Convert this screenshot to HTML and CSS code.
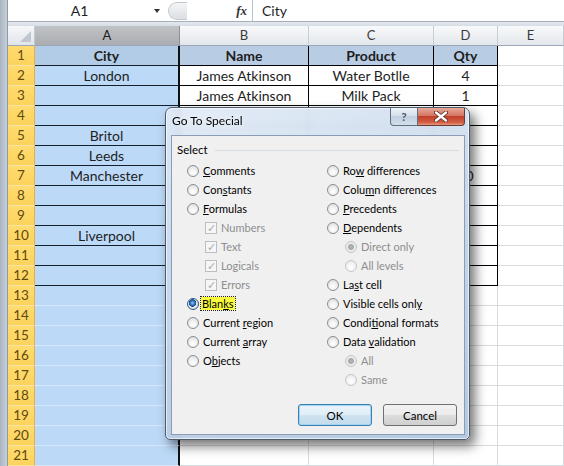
FILE: index.html
```html
<!DOCTYPE html>
<html lang="en">
<head>
    <meta charset="UTF-8">
    <meta name="viewport" content="width=device-width, initial-scale=1.0">
    <title>Go To Special</title>
    <link rel="stylesheet" href="styles.css">
</head>
<body>
    <div class="app">
        <div class="edge"></div>
        <div class="main">
            <div class="formula-bar">
                <div class="name-box">A1<span class="drop"></span></div>
                <div class="grip"></div>
                <div class="fx">fx</div>
                <div class="formula-input">City</div>
            </div>
            <div class="bar-gap"></div>

            <div class="sheet">
                <div class="corner"></div>
                <div class="ch sel">A</div>
                <div class="ch">B</div>
                <div class="ch">C</div>
                <div class="ch">D</div>
                <div class="ch">E</div>

                <div class="rh">1</div><div class="c a t hd">City</div><div class="c t hd">Name</div><div class="c t hd">Product</div><div class="c t hd">Qty</div><div class="c"></div>
                <div class="rh">2</div><div class="c a t">London</div><div class="c t">James Atkinson</div><div class="c t">Water Botlle</div><div class="c t">4</div><div class="c"></div>
                <div class="rh">3</div><div class="c a t"></div><div class="c t">James Atkinson</div><div class="c t">Milk Pack</div><div class="c t">1</div><div class="c"></div>
                <div class="rh">4</div><div class="c a t"></div><div class="c t"></div><div class="c t"></div><div class="c t"></div><div class="c"></div>
                <div class="rh">5</div><div class="c a t">Britol</div><div class="c t"></div><div class="c t"></div><div class="c t"></div><div class="c"></div>
                <div class="rh">6</div><div class="c a t">Leeds</div><div class="c t"></div><div class="c t"></div><div class="c t"></div><div class="c"></div>
                <div class="rh">7</div><div class="c a t">Manchester</div><div class="c t"></div><div class="c t"></div><div class="c t">10</div><div class="c"></div>
                <div class="rh">8</div><div class="c a t"></div><div class="c t"></div><div class="c t"></div><div class="c t"></div><div class="c"></div>
                <div class="rh">9</div><div class="c a t"></div><div class="c t"></div><div class="c t"></div><div class="c t"></div><div class="c"></div>
                <div class="rh">10</div><div class="c a t">Liverpool</div><div class="c t"></div><div class="c t"></div><div class="c t"></div><div class="c"></div>
                <div class="rh">11</div><div class="c a t"></div><div class="c t"></div><div class="c t"></div><div class="c t"></div><div class="c"></div>
                <div class="rh">12</div><div class="c a t"></div><div class="c t"></div><div class="c t"></div><div class="c t"></div><div class="c"></div>
                <div class="rh">13</div><div class="c a"></div><div class="c"></div><div class="c"></div><div class="c"></div><div class="c"></div>
                <div class="rh">14</div><div class="c a"></div><div class="c"></div><div class="c"></div><div class="c"></div><div class="c"></div>
                <div class="rh">15</div><div class="c a"></div><div class="c"></div><div class="c"></div><div class="c"></div><div class="c"></div>
                <div class="rh">16</div><div class="c a"></div><div class="c"></div><div class="c"></div><div class="c"></div><div class="c"></div>
                <div class="rh">17</div><div class="c a"></div><div class="c"></div><div class="c"></div><div class="c"></div><div class="c"></div>
                <div class="rh">18</div><div class="c a"></div><div class="c"></div><div class="c"></div><div class="c"></div><div class="c"></div>
                <div class="rh">19</div><div class="c a"></div><div class="c"></div><div class="c"></div><div class="c"></div><div class="c"></div>
                <div class="rh">20</div><div class="c a"></div><div class="c"></div><div class="c"></div><div class="c"></div><div class="c"></div>
                <div class="rh">21</div><div class="c a"></div><div class="c"></div><div class="c"></div><div class="c"></div><div class="c"></div>
            </div>
        </div>
    </div>

    <!-- Go To Special dialog, floats over the sheet -->
    <div class="dialog">
        <div class="titlebar">
            <span class="title">Go To Special</span>
            <div class="caption-btns">
                <span class="help">?</span>
                <span class="close">
                    <svg width="14" height="11" viewBox="0 0 14 11">
                        <path d="M2 1.5 L12 9.5 M12 1.5 L2 9.5" stroke="#5a2a22" stroke-width="4" stroke-linecap="round"/>
                        <path d="M2 1.5 L12 9.5 M12 1.5 L2 9.5" stroke="#fff" stroke-width="2.4" stroke-linecap="round"/>
                    </svg>
                </span>
            </div>
        </div>
        <div class="panel">
            <div class="legend"><span>Select</span></div>
            <div class="options">
                <div class="col">
                    <div class="opt"><i class="radio"></i><span><u>C</u>omments</span></div>
                    <div class="opt"><i class="radio"></i><span>Con<u>s</u>tants</span></div>
                    <div class="opt"><i class="radio"></i><span><u>F</u>ormulas</span></div>
                    <div class="opt sub off"><i class="check">✓</i><span>Numbers</span></div>
                    <div class="opt sub off"><i class="check">✓</i><span>Text</span></div>
                    <div class="opt sub off"><i class="check">✓</i><span>Logicals</span></div>
                    <div class="opt sub off"><i class="check">✓</i><span>Errors</span></div>
                    <div class="opt"><i class="radio on"></i><span class="hl">Blan<u>k</u>s</span></div>
                    <div class="opt"><i class="radio"></i><span>Current <u>r</u>egion</span></div>
                    <div class="opt"><i class="radio"></i><span>Current <u>a</u>rray</span></div>
                    <div class="opt"><i class="radio"></i><span>O<u>b</u>jects</span></div>
                </div>
                <div class="col">
                    <div class="opt"><i class="radio"></i><span>Ro<u>w</u> differences</span></div>
                    <div class="opt"><i class="radio"></i><span>Colu<u>m</u>n differences</span></div>
                    <div class="opt"><i class="radio"></i><span><u>P</u>recedents</span></div>
                    <div class="opt"><i class="radio"></i><span><u>D</u>ependents</span></div>
                    <div class="opt sub off"><i class="radio dot"></i><span>Direct only</span></div>
                    <div class="opt sub off"><i class="radio"></i><span>All levels</span></div>
                    <div class="opt"><i class="radio"></i><span>La<u>s</u>t cell</span></div>
                    <div class="opt"><i class="radio"></i><span>Visible cells onl<u>y</u></span></div>
                    <div class="opt"><i class="radio"></i><span>Condi<u>t</u>ional formats</span></div>
                    <div class="opt"><i class="radio"></i><span>Data <u>v</u>alidation</span></div>
                    <div class="opt sub off"><i class="radio dot"></i><span>All</span></div>
                    <div class="opt sub off"><i class="radio"></i><span>Same</span></div>
                </div>
            </div>
            <div class="buttons">
                <button class="btn default">OK</button>
                <button class="btn">Cancel</button>
            </div>
        </div>
    </div>
</body>
</html>
```

FILE: styles.css
```css
body {
    margin: 0;
    width: 564px;
    height: 466px;
    overflow: hidden;
    position: relative;
    background: #fff;
    font-family: "Lato", "Liberation Sans", sans-serif;
    color: #1e1e1e;
}
.app {
    display: flex;
    height: 466px;
}
.edge {
    width: 8px;
    flex: none;
    box-sizing: border-box;
    background: linear-gradient(to right, #a9b4c1, #c7d0da);
    border-right: 1px solid #8e9aa8;
}
.main {
    flex: 1;
    display: flex;
    flex-direction: column;
    min-width: 0;
}

/* formula bar */
.formula-bar {
    height: 22px;
    box-sizing: border-box;
    display: flex;
    align-items: center;
    background: #fff;
    border-bottom: 1px solid #a5afbb;
}
.name-box {
    width: 157px;
    height: 100%;
    box-sizing: border-box;
    padding-right: 14px;
    position: relative;
    text-align: center;
    font-size: 14px;
    line-height: 21px;
}
.drop {
    position: absolute;
    right: 5px;
    top: 9px;
    border-left: 3.5px solid transparent;
    border-right: 3.5px solid transparent;
    border-top: 4px solid #333;
}
.grip {
    width: 19px;
    height: 18px;
    margin-left: 3px;
    box-sizing: border-box;
    border: 1px solid #c4c9cf;
    border-right: none;
    border-radius: 9px 0 0 9px;
    background: linear-gradient(#f4f5f7, #dcdfe3);
}
.fx {
    width: 65px;
    box-sizing: border-box;
    padding-right: 5px;
    text-align: right;
    font-family: "Liberation Serif", serif;
    font-style: italic;
    font-weight: bold;
    font-size: 13px;
    color: #333;
}
.formula-input {
    flex: 1;
    height: 100%;
    box-sizing: border-box;
    border-left: 1px solid #b5c3d3;
    padding-left: 9px;
    font-size: 14px;
    line-height: 21px;
}
.bar-gap {
    height: 4px;
    background: linear-gradient(#e6eaef, #d6dce4);
}

/* sheet */
.sheet {
    display: grid;
    grid-template-columns: 27px 145px 129px 125px 64px 1fr;
    grid-auto-rows: 20px;
    font-size: 14px;
}
.sheet > div {
    box-sizing: border-box;
    white-space: nowrap;
    overflow: hidden;
    text-align: center;
    line-height: 19px;
}
.corner {
    position: relative;
    background: linear-gradient(#f6f7f9, #e1e5ea);
    border-right: 1px solid #c3c9d1;
    border-bottom: 1px solid #9aa7b6;
}
.corner::after {
    content: "";
    position: absolute;
    right: 3px;
    bottom: 3px;
    border-left: 11px solid transparent;
    border-bottom: 11px solid #c1c7cf;
}
.ch {
    background: linear-gradient(#f8f9fa, #e3e7ec);
    border-right: 1px solid #c7cdd5;
    border-bottom: 1px solid #9aa7b6;
    color: #3a3a3a;
    font-size: 13px;
}
.ch.sel {
    background: linear-gradient(#c0c2c5, #aaadb1);
    border-right: 1px solid #8f9397;
    color: #202020;
}
.rh {
    background: linear-gradient(#ffdc70, #fcd25c);
    border-right: 1px solid #e2b24a;
    border-bottom: 1px solid #f7e3a4;
    color: #5f4a12;
    font-size: 13.5px;
}
.c {
    border-right: 1px solid #d9dcdf;
    border-bottom: 1px solid #d9dcdf;
}
.c.a {
    background: #bcd9f7;
    border-right: 2px solid #111;
    border-bottom: 1px solid #d6e6f8;
}
.c.t {
    border-right: 1px solid #000;
    border-bottom: 1px solid #000;
}
.c.a.t {
    border-right: 2px solid #111;
    border-bottom: 1px solid #15202c;
}
.c.hd {
    background: #b8cce4;
    font-weight: bold;
}
.c.a.hd {
    background: #b2cbe7;
}

/* dialog */
.dialog {
    position: absolute;
    left: 165px;
    top: 107px;
    width: 305px;
    height: 333px;
    box-sizing: border-box;
    padding: 0 4px 4px 5px;
    display: flex;
    flex-direction: column;
    border: 1px solid #4d5b6a;
    border-radius: 7px 7px 5px 5px;
    background: linear-gradient(160deg, rgba(224, 234, 246, 0.9), rgba(190, 209, 231, 0.92) 60%, rgba(176, 198, 224, 0.94));
    backdrop-filter: blur(3px);
    box-shadow: 5px 6px 12px rgba(0, 0, 0, 0.55), inset 0 0 0 1px rgba(255, 255, 255, 0.6);
    font-size: 11px;
    color: #000;
}
.titlebar {
    height: 27px;
    display: flex;
    justify-content: space-between;
    align-items: flex-start;
}
.title {
    padding-left: 1px;
    font-size: 12px;
    line-height: 26px;
    text-shadow: 0 0 6px rgba(255, 255, 255, 0.9);
}
.caption-btns {
    display: flex;
    height: 18px;
}
.caption-btns span {
    display: flex;
    align-items: center;
    justify-content: center;
    box-sizing: border-box;
    height: 18px;
    border: 1px solid #5f6f82;
    border-top: none;
}
.help {
    width: 28px;
    border-radius: 0 0 0 4px;
    background: linear-gradient(#eef3f9, #d2dde9 50%, #c0cfe0 50%, #d3deea);
    color: #4a5663;
    font-weight: bold;
    font-size: 12px;
}
.close {
    width: 47px;
    border-left: none !important;
    border-color: #6a3a34 !important;
    border-radius: 0 0 4px 0;
    background: linear-gradient(#e9a99a, #d47663 45%, #c2402a 50%, #d35f46 85%, #e69a7e);
}

.panel {
    flex: 1;
    display: flex;
    flex-direction: column;
    background: #f0f0f0;
    border: 1px solid #8a9db5;
}
.legend {
    display: flex;
    align-items: center;
    padding: 7px 5px 0 5px;
    line-height: 14px;
    font-size: 11.5px;
}
.legend::after {
    content: "";
    flex: 1;
    margin-left: 7px;
    border-top: 1px solid #d5dde3;
}
.options {
    display: grid;
    grid-template-columns: 140px 1fr;
    padding: 4px 0 0 15px;
}
.opt {
    display: flex;
    align-items: center;
    height: 19px;
    white-space: nowrap;
}
.opt.sub {
    padding-left: 18px;
}
.opt.off {
    color: #8d8e8f;
}
.radio {
    width: 12px;
    height: 12px;
    margin-right: 4px;
    flex: none;
    box-sizing: border-box;
    border-radius: 50%;
    border: 1px solid #8b8e92;
    background: radial-gradient(circle at 50% 65%, #ffffff 0, #f2f2f2 40%, #d4d6d9 100%);
}
.radio.on {
    border-color: #2d5a88;
    background: radial-gradient(circle at 45% 40%, #8cc4f2 0, #2b6fb6 2.5px, #12407a 3.5px, #e8ecf0 4px, #d2d6da 100%);
}
.off .radio {
    border-color: #c3c5c8;
    background: radial-gradient(circle at 50% 65%, #fff 0, #f3f3f3 50%, #e3e4e6 100%);
}
.off .radio.dot {
    background: radial-gradient(circle, #b4b6b9 0, #a5a7aa 2.5px, #eceded 3.5px, #e3e4e6 100%);
}
.check {
    width: 12px;
    height: 12px;
    margin-right: 4px;
    flex: none;
    box-sizing: border-box;
    border: 1px solid #bcbec1;
    background: #f6f6f6;
    color: #a9abae;
    font-style: normal;
    font-size: 11px;
    line-height: 10px;
    text-align: center;
}
.hl {
    margin-left: -2px;
    padding: 0 1px;
    line-height: 13px;
    background: #fafa3c;
    outline: 1px dotted #222;
}

.buttons {
    margin-top: auto;
    display: flex;
    justify-content: flex-end;
    gap: 11px;
    padding: 0 7px 8px 0;
}
.btn {
    width: 74px;
    height: 22px;
    box-sizing: border-box;
    border: 1px solid #707070;
    border-radius: 3px;
    background: linear-gradient(#f2f2f2, #ebebeb 50%, #dddddd 50%, #cfcfcf);
    font-family: "Lato", "Liberation Sans", sans-serif;
    font-size: 11.5px;
    color: #000;
    padding: 0;
}
.btn.default {
    border-color: #3c7fb1;
    background: linear-gradient(#eaf4fa, #e0eef7 50%, #cfe3f0 50%, #c2dcee);
    box-shadow: inset 0 0 0 1px #9fd3f2;
}
```
